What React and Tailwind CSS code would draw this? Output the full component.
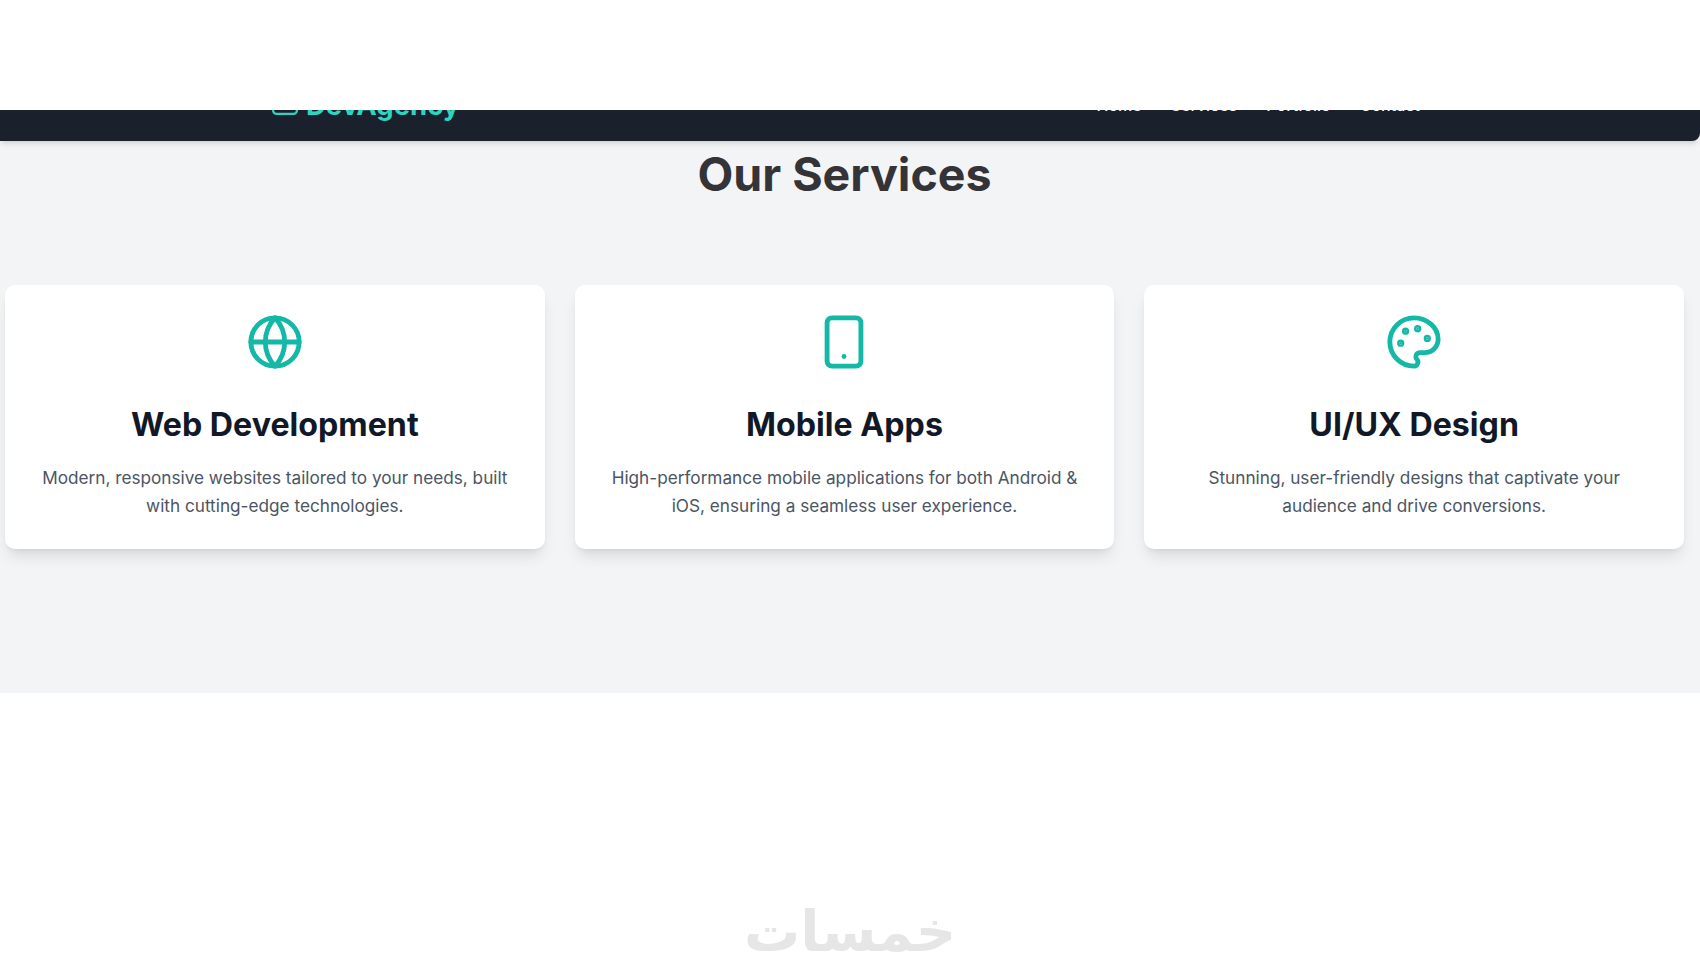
import { Globe, Smartphone } from "lucide-react";

// older lucide palette, the current package draws it differently
function PaletteIcon({ size, className }) {
  return (
    <svg width={size} height={size} viewBox="0 0 24 24" fill="none" stroke="currentColor" strokeWidth="2" strokeLinecap="round" strokeLinejoin="round" className={className}>
      <circle cx="13.5" cy="6.5" r=".5" fill="currentColor" />
      <circle cx="17.5" cy="10.5" r=".5" fill="currentColor" />
      <circle cx="8.5" cy="7.5" r=".5" fill="currentColor" />
      <circle cx="6.5" cy="12.5" r=".5" fill="currentColor" />
      <path d="M12 2C6.5 2 2 6.5 2 12s4.5 10 10 10c.926 0 1.648-.746 1.648-1.688 0-.437-.18-.835-.437-1.125-.29-.289-.438-.652-.438-1.125a1.64 1.64 0 0 1 1.668-1.668h1.996c3.051 0 5.555-2.503 5.555-5.554C21.965 6.012 17.461 2 12 2z" />
    </svg>
  );
}

const services = [
  { icon: Globe, title: "Web Development", text: "Modern, responsive websites tailored to your needs, built with cutting-edge technologies." },
  { icon: Smartphone, title: "Mobile Apps", text: "High-performance mobile applications for both Android & iOS, ensuring a seamless user experience." },
  { icon: PaletteIcon, title: "UI/UX Design", text: "Stunning, user-friendly designs that captivate your audience and drive conversions." },
];

const links = ["Home", "Services", "Portfolio", "Contact"];

export default function App() {
  return (
    <div className="h-[970px] overflow-hidden bg-white font-['Inter',sans-serif]">
      <div className="h-[110px]" />

      {/* Navbar, top of it cut off in the capture */}
      <nav className="relative z-10 h-[31px] overflow-hidden rounded-br-lg bg-[#1a202c] shadow-md">
        <div className="-mt-[23px] flex h-[36px] items-center justify-between pl-[272px] pr-[280px]">
          <div className="flex items-center gap-2 text-[#2dd4bf]">
            <svg width="26" height="26" viewBox="0 0 26 26" fill="none" stroke="currentColor" strokeWidth="2.2" strokeLinecap="round" className="mb-[6px]">
              <rect x="1.1" y="1.1" width="23.8" height="23.8" rx="3.5" />
              <path d="M8 19.5h10" />
            </svg>
            <span className="text-[27.5px] font-bold leading-9">DevAgency</span>
          </div>
          <div className="flex items-center gap-[29px] text-[16px] font-medium text-white">
            {links.map(l => <a key={l}>{l}</a>)}
          </div>
        </div>
      </nav>

      <section className="h-[552px] bg-[#f3f4f6] pl-[5px] pr-[16px]">
        <h2 className="pt-[3px] text-center text-[46.5px] font-bold leading-[60px] text-[#333338]">Our Services</h2>
        <div className="mt-[81px] grid grid-cols-3 gap-[30px]">
          {services.map(s => (
            <div key={s.title} className="flex h-[264px] flex-col items-center rounded-[10px] bg-white px-[30px] pt-[28px] text-center shadow-lg">
              <s.icon size={58} strokeWidth={2} className="text-[#14b8a6]" />
              <h3 className="mt-[34px] text-[32.2px] font-bold leading-[40px] text-[#111827]">{s.title}</h3>
              <p className="mt-[19px] text-[17.2px] leading-[28px] text-[#4b5563]">{s.text}</p>
            </div>
          ))}
        </div>
      </section>

      {/* Watermark */}
      <div className="mt-[204px] text-center font-['DejaVu_Sans',sans-serif] text-[56px] font-bold leading-[70px] text-[#e6e6e6]" dir="rtl">
        خمسات
      </div>
    </div>
  );
}
